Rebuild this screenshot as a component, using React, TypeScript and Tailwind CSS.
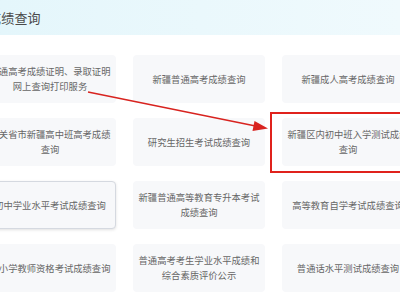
import React from "react";

type Item = { label: string; active?: boolean; marked?: boolean };

const items: Item[] = [
  { label: "普通高考成绩证明、录取证明网上查询打印服务" },
  { label: "新疆普通高考成绩查询" },
  { label: "新疆成人高考成绩查询" },
  { label: "有关省市新疆高中班高考成绩查询" },
  { label: "研究生招生考试成绩查询" },
  { label: "新疆区内初中班入学测试成绩查询", marked: true },
  { label: "初中学业水平考试成绩查询", active: true },
  { label: "新疆普通高等教育专升本考试成绩查询" },
  { label: "高等教育自学考试成绩查询" },
  { label: "中小学教师资格考试成绩查询" },
  { label: "普通高考考生学业水平成绩和综合素质评价公示" },
  { label: "普通话水平测试成绩查询" },
];

export default function App() {
  return (
    <div
      className="relative w-[400px] h-[300px] overflow-hidden bg-white"
      style={{ fontFamily: '"Noto Sans CJK SC", "Noto Sans", sans-serif' }}
    >
      {/* Title band */}
      <div className="h-[35px] flex items-center bg-gradient-to-r from-[#e4f6fb] to-[#f0fafd]">
        <h2 className="-ml-[12px] text-[13px] leading-none text-[#4a4a4a] tracking-[0.2px]">成绩查询</h2>
      </div>

      {/* Cards */}
      <div className="-ml-4 pt-5 grid grid-cols-[132px_132px_132px] gap-x-[17px] gap-y-[15px]">
        {items.map((item) => (
          <div
            key={item.label}
            className={`relative h-[48px] rounded flex items-center justify-center px-[4px] text-center text-[9.3px] leading-[15px] text-[#666] ${
              item.active
                ? "bg-[#f7f8fa] border border-[#d5d9e0] shadow-[0_1px_3px_rgba(0,0,0,0.12)]"
                : "bg-[#f7f8fa]"
            }`}
          >
            <span>{item.label}</span>
            {item.marked && (
              <span className="absolute -left-3 -top-[6px] -right-3 -bottom-[7px] border-2 border-[#e0221c]" />
            )}
          </div>
        ))}
      </div>

      {/* Annotation arrow */}
      <svg className="absolute left-0 top-0 pointer-events-none" width="400" height="300" viewBox="0 0 400 300">
        <line x1="88" y1="92" x2="258" y2="126.5" stroke="#d8231f" strokeWidth="1.4" />
        <polygon points="268,128.5 254.5,121 252.5,131" fill="#d8231f" />
      </svg>
    </div>
  );
}
